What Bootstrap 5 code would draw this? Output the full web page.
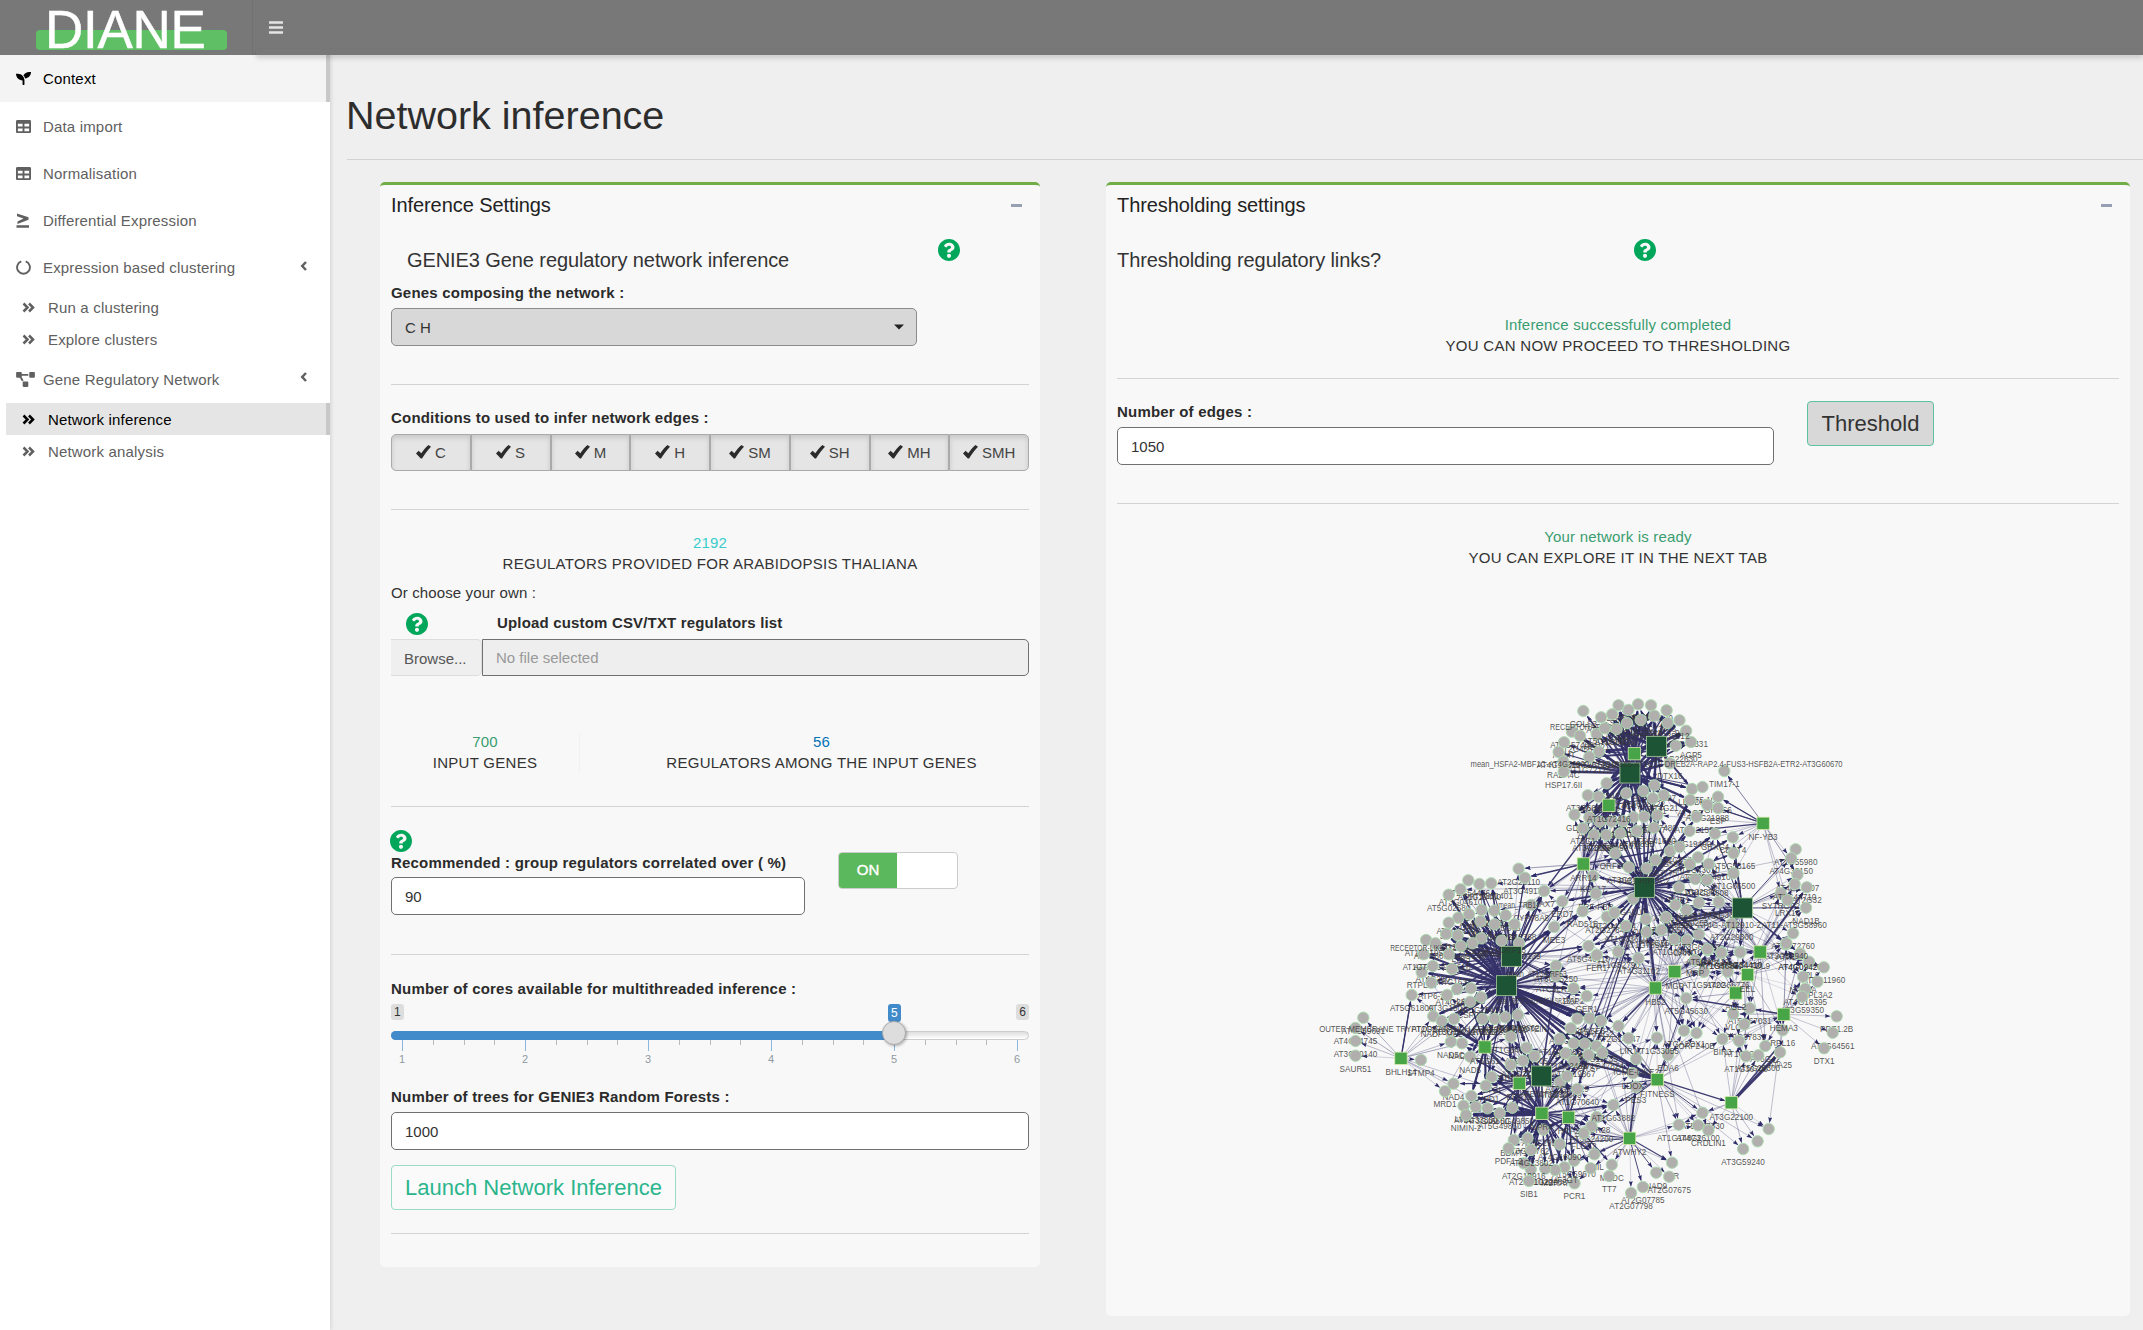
<!DOCTYPE html>
<html lang="en">
<head>
<meta charset="utf-8">
<title>DIANE</title>
<link href="https://cdn.jsdelivr.net/npm/bootstrap@5.3.0/dist/css/bootstrap.min.css" rel="stylesheet">
<style>
body{font-family:"Liberation Sans",Arial,sans-serif;font-size:15px;line-height:21px;color:#333;background:#efefef;height:1330px;overflow:hidden}
.topbar{height:55px;background:#787878;position:relative;z-index:3}
.brand{width:253px;height:55px;padding-left:36px;border-right:1px solid #717171}
.brand-plate{width:191px;height:20px;margin-top:30px;background:#5fbf64;border-radius:4px;position:relative}
.brand-name{position:absolute;left:9px;bottom:-6px;font-size:53px;line-height:53px;color:#fff;-webkit-text-stroke:.5px #fff;letter-spacing:-.3px}
.toggler{padding:21px 0 0 16px}
.top-shadow{position:absolute;left:256px;right:0;bottom:0;height:6px;box-shadow:0 3px 5px rgba(0,0,0,.16);z-index:-1}
.side{width:330px;background:#fff;box-shadow:1px 0 4px rgba(0,0,0,.12);height:1275px;flex:none}
.side a{display:flex;align-items:center;color:#606060;text-decoration:none;height:47px;padding-left:16px;border-right:4px solid transparent;letter-spacing:.17px}
.side a svg{width:15px;height:15px;margin-right:12px;fill:currentColor;flex:none}
.side a svg.wide{width:19px;margin-right:8px}
.side .now{background:#f4f4f4;color:#000;border-color:#c8c8c8}
.side .sub{height:32px;margin-left:6px;padding-left:16px}
.side .sub svg{width:13px;margin-right:13px}
.side .sub.now{background:#e5e5e5}
.side a svg.caret{width:8px;height:12px;margin:-4px 18px 0 auto}
.line-ico{fill:none!important;stroke:currentColor}
.page-h{font-size:39.5px;line-height:44px;font-weight:400;color:#2d2d2d;margin:38px 0 0 -1px}
hr{margin:0;border:0;height:1px;background:#d3d3d3;opacity:1}
.panel{background:#f8f8f8;border-top:3px solid #70ad47;border-radius:5px;padding:0 11px}
.p-left{width:660px;height:1085px;margin-left:33px}
.p-right{width:1024px;height:1134px;margin-left:66px}
.p-head{height:40px;color:#222;font-size:20px;letter-spacing:-.08px}
.p-head i{width:11px;height:3px;background:#97a0b3;margin-right:7px}
.sect{font-size:20px;line-height:22px;font-weight:400;margin:24px 0 0;color:#333;letter-spacing:-.09px}
.help{width:22px;height:22px;fill:#00a65a;display:block}
.lab{font-weight:700;letter-spacing:.2px;line-height:21px;display:block;color:#2b2b2b}
.box-in{height:38px;border:1px solid #707070;border-radius:5px;background:#fff;padding:0 13px;display:flex;align-items:center;color:#333;font-size:15px}
.conds{height:37px}
.conds .btn{flex:1 1 0;border:1px solid #aaa;border-radius:0;background:#e5e5e5;box-shadow:inset 0 3px 5px rgba(0,0,0,.125);font-size:15px;color:#444;padding:0;line-height:21px}
.conds .btn:first-child{border-radius:5px 0 0 5px}.conds .btn:last-child{border-radius:0 5px 5px 0}
.conds svg{width:15px;height:14px;fill:#2b2b2b;vertical-align:-1px;margin-right:4px}
.stat{text-align:center;line-height:20.5px;letter-spacing:.28px}
.stat b{display:block;font-weight:400;letter-spacing:.18px}
.g{color:#3a9d70}
.browse{width:91px;border:1px solid #ddd;border-left:0;background:#efefef;border-radius:0 5px 5px 0;padding:8px 0 0 13px;color:#555}
.switch{width:120px;height:37px;border:1px solid #ccc;border-radius:4px;background:#fff;overflow:hidden}
.switch span{display:block;width:58px;height:100%;background:#5cb85c;color:#fff;text-align:center;line-height:34px;-webkit-text-stroke:.4px #fff}
.slider{height:66px;position:relative;font-size:12px}
.slider .tagv{position:absolute;top:0;height:16px;line-height:16px;padding:0 3px;background:#ddd;border-radius:3px}
.slider .tagv.cur{left:497px;height:18px;line-height:18px;background:#428bca;color:#fff}
.track{position:absolute;top:27px;left:0;right:0;height:9px;border:1px solid #ccc;border-radius:5px;background:linear-gradient(#dedede,#fff)}
.fill{position:absolute;top:27px;left:0;width:503px;height:9px;border-radius:5px 0 0 5px;background:#428bca}
.knob{position:absolute;left:491px;top:17px;width:24px;height:24px;border-radius:50%;background:#ddd;border:1px solid #aaa;box-shadow:1px 1px 3px rgba(0,0,0,.3)}
.ticks{position:absolute;top:36px;left:0;width:638px;height:32px}
.btn-run{height:45px;width:285px;border:1px solid #9bdcc4;border-radius:4px;font-size:22px;color:#2bb58c;padding:0;background:#fafafa}
.btn-thr{height:45px;width:127px;margin-left:33px;border:1px solid #5cc3a0;border-radius:4px;background:#d8d8d8;font-size:22px;color:#333;padding:0}
#net text{font:8.2px "Liberation Sans",Arial,sans-serif;fill:#343434;fill-opacity:.85;text-anchor:middle}
</style>
<script src="https://cdn.jsdelivr.net/npm/bootstrap@5.3.0/dist/js/bootstrap.bundle.min.js"></script>
</head>
<body>
<svg width="0" height="0" class="d-none">
<symbol id="q" viewBox="8 8 496 496"><path d="M504 256c0 137-111 248-248 248S8 393 8 256C8 119 119 8 256 8s248 111 248 248zM262.700 90c-54.500 0-89.300 23-116.600 63.800-3.500 5.300-2.300 12.400 2.700 16.200l34.700 26.300c5.200 4 12.600 3 16.700-2.100 17.800-22.700 30.100-35.800 57.300-35.800 20.400 0 45.700 13.100 45.700 33 0 15-12.400 22.600-32.600 34C247 238.500 216 255 216 296v4c0 6.600 5.400 12 12 12h56c6.600 0 12-5.400 12-12v-1.300c0-28.500 83.200-29.700 83.200-106.700 0-58-60.200-102-116.500-102zM256 338c-25.400 0-46 20.600-46 46s20.600 46 46 46 46-20.600 46-46-20.600-46-46-46z"/></symbol>
<symbol id="tb" viewBox="0 16 512 480"><path d="M464 32H48C21.500 32 0 53.500 0 80v352c0 26.500 21.500 48 48 48h416c26.500 0 48-21.500 48-48V80c0-26.500-21.500-48-48-48zM224 416H64v-96h160v96zm0-160H64v-96h160v96zm224 160H288v-96h160v96zm0-160H288v-96h160v96z"/></symbol>
<symbol id="dbl" viewBox="0 0 13 12"><path d="M1.500 2 5.500 6 1.500 10M7 2 11 6 7 10" fill="none" stroke="currentColor" stroke-width="2.500"/></symbol>
<symbol id="lt" viewBox="0 0 8 12"><path d="M6 2 2.200 6 6 10" fill="none" stroke="currentColor" stroke-width="2.500"/></symbol>
<symbol id="ck" viewBox="0 0 15 14"><path d="M0 8.500 2.600 5.800 5.300 8.300C7.500 5 9.800 2.200 12.500 0L15 1.800C11.500 5.300 9 9 6 13.600H4.800Z"/></symbol>
</svg>
<header class="topbar d-flex">
  <div class="brand"><div class="brand-plate"><span class="brand-name">DIANE</span></div></div>
  <div class="toggler"><svg width="14" height="13" class="d-block"><path d="M0 1.500h14M0 6.500h14M0 11.500h14" stroke="#e4e4e4" stroke-width="2.400"/></svg></div>
  <div class="top-shadow"></div>
</header>
<div class="d-flex">
<nav class="side">
  <a href="#" class="now"><svg viewBox="0 0 512 512"><path d="M64 96H0c0 123.700 100.300 224 224 224v144c0 8.800 7.200 16 16 16h32c8.800 0 16-7.200 16-16V320C288 196.300 187.700 96 64 96zm384-64c-84.200 0-157.400 46.500-195.700 115.200 27.700 30.200 48.200 66.900 59 107.600C424.300 243.100 512 147.900 512 32h-64z"/></svg>Context</a>
  <a href="#" style="margin-top:1px"><svg><use href="#tb"/></svg>Data import</a>
  <a href="#"><svg><use href="#tb"/></svg>Normalisation</a>
  <a href="#"><svg viewBox="0 0 15 15"><path d="M1 .5 12.500 4.300v2.400L1.500 11V8.400L7.500 5.600 1 3.200zM.5 12.300h12.500v2.500H.5z"/></svg>Differential Expression</a>
  <a href="#"><svg viewBox="0 0 15 15" class="line-ico"><path d="M5.300 1.300a6.400 6.400 0 1 0 4.400 0" stroke-width="1.900"/></svg>Expression based clustering<svg class="caret"><use href="#lt"/></svg></a>
  <a href="#" class="sub"><svg><use href="#dbl"/></svg>Run a clustering</a>
  <a href="#" class="sub"><svg><use href="#dbl"/></svg>Explore clusters</a>
  <a href="#" style="height:48px"><svg class="wide" viewBox="0 0 640 512"><path d="M384 320H256c-17.700 0-32 14.300-32 32v128c0 17.700 14.300 32 32 32h128c17.700 0 32-14.300 32-32V352c0-17.700-14.300-32-32-32zM192 32c0-17.700-14.300-32-32-32H32C14.300 0 0 14.300 0 32v128c0 17.700 14.300 32 32 32h95.700L201 320c11-19 31.400-32 55-32h.3L192 175.500V128h224V64H192V32zM608 0H480c-17.700 0-32 14.300-32 32v128c0 17.700 14.300 32 32 32h128c17.700 0 32-14.300 32-32V32c0-17.700-14.300-32-32-32z"/></svg>Gene Regulatory Network<svg class="caret"><use href="#lt"/></svg></a>
  <a href="#" class="sub now"><svg><use href="#dbl"/></svg>Network inference</a>
  <a href="#" class="sub"><svg><use href="#dbl"/></svg>Network analysis</a>
</nav>
<main style="padding-left:17px" class="flex-grow-1">
  <h1 class="page-h">Network inference</h1>
  <hr style="margin:22px 0">
  <div class="d-flex align-items-start">
  <section class="panel p-left">
    <div class="p-head d-flex align-items-center justify-content-between">Inference Settings<i></i></div>
    <div class="d-flex justify-content-between" style="height:57px">
      <h4 class="sect" style="padding-left:16px">GENIE3 Gene regulatory network inference</h4>
      <svg class="help" style="margin:14px 69px 0 0"><use href="#q"/></svg>
    </div>
    <label class="lab">Genes composing the network :</label>
    <div class="box-in justify-content-between" style="width:526px;margin-top:5px;background:#d8d8d8;border-color:#8c8c8c">C H<svg width="10" height="6" style="margin-right:-1px"><path d="M0 .5h10L5 5.500z" fill="#222"/></svg></div>
    <hr style="margin:38px 0 22px">
    <label class="lab">Conditions to used to infer network edges :</label>
    <div class="conds d-flex" style="margin-top:6px" id="conds"></div>
    <hr style="margin:38px 0 23px">
    <div class="stat"><b style="color:#39cccc">2192</b>REGULATORS PROVIDED FOR ARABIDOPSIS THALIANA</div>
    <div style="margin-top:8px;letter-spacing:.12px">Or choose your own :</div>
    <div class="d-flex align-items-center" style="height:24px;margin-top:9px;padding-left:15px"><svg class="help"><use href="#q"/></svg><label class="lab" style="margin:-3px 0 0 69px;letter-spacing:.17px">Upload custom CSV/TXT regulators list</label></div>
    <div class="d-flex" style="margin-top:3px"><div class="browse">Browse...</div><div class="box-in flex-grow-1" style="height:37px;border-radius:0 5px 5px 0;background:#eee;color:#999">No file selected</div></div>
    <div class="d-flex" style="margin-top:56px"><div class="stat" style="width:189px;border-right:1px solid #f2f2f2"><b class="g">700</b>INPUT GENES</div><div class="stat" style="width:483px;margin-right:-34px"><b style="color:#0073b7">56</b>REGULATORS AMONG THE INPUT GENES</div></div>
    <hr style="margin:33px 0 23px">
    <div class="d-flex align-items-start">
      <div style="width:414px"><svg class="help" style="margin-left:-1px"><use href="#q"/></svg><label class="lab">Recommended : group regulators correlated over ( %)</label><div class="box-in" style="margin-top:4px">90</div></div>
      <div class="switch" style="margin:22px 0 0 33px"><span>ON</span></div>
    </div>
    <hr style="margin:39px 0 23px">
    <label class="lab">Number of cores available for multithreaded inference :</label>
    <div class="slider" style="margin-top:5px">
      <span class="tagv" style="left:0">1</span><span class="tagv" style="right:0">6</span><span class="tagv cur">5</span>
      <div class="track"></div><div class="fill"></div><svg class="ticks" id="ticks"></svg><div class="knob"></div>
    </div>
    <label class="lab" style="margin-top:16px">Number of trees for GENIE3 Random Forests :</label>
    <div class="box-in" style="margin-top:5px">1000</div>
    <button class="btn btn-run" style="margin-top:15px">Launch Network Inference</button>
    <hr style="margin-top:23px">
  </section>
  <section class="panel p-right">
    <div class="p-head d-flex align-items-center justify-content-between">Thresholding settings<i></i></div>
    <div class="d-flex justify-content-between" style="height:90px">
      <h4 class="sect">Thresholding regulatory links?</h4>
      <svg class="help" style="margin:14px 463px 0 0"><use href="#q"/></svg>
    </div>
    <div class="stat"><b class="g">Inference successfully completed</b>YOU CAN NOW PROCEED TO THRESHOLDING</div>
    <hr style="margin:22px 0">
    <div class="d-flex align-items-start">
      <div style="width:657px"><label class="lab">Number of edges :</label><div class="box-in" style="margin-top:5px">1050</div></div>
      <button class="btn btn-thr">Threshold</button>
    </div>
    <hr style="margin:38px 0 23px">
    <div class="stat"><b class="g">Your network is ready</b>YOU CAN EXPLORE IT IN THE NEXT TAB</div>
    <svg id="net" class="d-block" width="1002" height="700" viewBox="1117 600 1002 700" style="margin-top:32px"></svg>
  </section>
  </div>
</main>
</div>
<script>
document.getElementById('conds').innerHTML=['C','S','M','H','SM','SH','MH','SMH'].map(c=>`<button class="btn"><svg><use href="#ck"/></svg>${c}</button>`).join('');
let t='';
for(let i=0;i<=20;i++){const x=11+i*30.75,big=i%4===0;
 t+=`<rect x="${Math.round(x)}" y="0" width="1" height="${big?11:5}" fill="${big?'#8ab7dd':'#bbb'}"/>`;
 if(big)t+=`<text x="${x}" y="23" font-size="11" fill="#8f9aa3" text-anchor="middle">${i/4+1}</text>`}
document.getElementById('ticks').innerHTML=t;

// Network layout: upper and lower halves are stored on their own grid
const U=[0,680],L=[0,940];
const at=(o,x,y)=>[1300+x*.36990,o[1]+y/3];
// hubs: half, x, y, big, reach, edge width, label
const hubs=[[U,964,199,1,60,2.600,''],[U,892,279,1,88,2.100,''],[U,931,622,1,105,1.700,'PIB1-HIPOC2'],[U,1196,684,1,85,.9,''],[L,572,49,1,85,1.700,'-ORF13'],[L,558,137,1,108,2.300,''],[L,653,408,1,68,1.700,''],
[U,904,221,0,62,1.900,''],[U,835,376,0,46,1.400,'AT1G72416'],[U,1252,430,0,66,.8,'NF-YB3'],[U,766,552,0,75,.9,'ARR14'],[U,1244,816,0,95,.7,'TDL9'],
[L,500,321,0,58,1.300,'AT5G61'],[L,273,355,0,68,.8,'BHLH14'],[L,593,430,0,66,1.400,'ERF12'],[L,654,520,0,76,1.900,'NPR4'],[L,726,532,0,70,1.200,'HRF2'],[L,891,595,0,78,.9,'ATWHY2'],[L,966,419,0,88,.9,'FITNESS'],[L,1166,488,0,60,.8,'AT3G22100'],[L,1178,159,0,60,.7,'AGL2'],[L,961,144,0,88,.8,'HB52'],[L,1013,95,0,85,.7,'MGP'],[L,1210,104,0,62,.7,'EEL'],[L,1308,223,0,66,.7,'HEMA3']];
const up=`766,93,GOLS3;861,76;914,73,1G09450;949,76,AT5G25170;991,91,250;844,103;888,90,SYTRAP2;814,112,AT2G52;958,107;1026,121,90;1044,152;1057,186,AGP5;1016,197,AT5G22630;994,129;884,129;921,120;735,155,AT5G57460;757,167,AT2G45570;802,162,HSP21;824,145;856,147;714,187,ASMT;699,216;808,215,AT2G58995;782,231,AT1G72125;712,245,RABA4C;713,275,HSP17.6II;1000,250,DTX16;1147,273,TIM17-1;829,310,AT5G54120;958,316;928,333;882,340,AT4G47;983,346,AT4G21;954,355,GASA1;778,346,AT3G60780;807,350;1060,327,LECDH;1088,321,AT5.10;1130,350,GRXS6;1055,360,AT1G7;1101,375,AT3G21988;1130,384,ESP;742,404,GDL;782,412,EXPA7;810,425;842,425;873,424;902,412;930,410;966,406,AT3G7480;1072,410,AT1G21550;1053,453,AT5G19400;1122,461,GRXC4;1170,472,CDST4;957,443,AT5G41690;911,453,AT4G89B;866,460;828,465,AT3G36650;795,465,AT3G18680;765,445,AT5G1;1000,513;1026,501;1172,520,AT5G53165;852,520,ORF107;961,540;889,562;937,565,PIB1;1076,532,AT5G43010;1105,552;1054,552,AT2G;1172,580,AT1G66500;1069,597,AT1G02570;1100,600;792,588,KCS17;591,566,AT2G23110;608,593,AT3G49130;800,641,ERF-FBR;660,633,CAX7;709,664,ERD7;625,675,CYP78A8;764,694,RAD51B;830,710,AT2G27840;850,698;687,741,MEE3;901,656,GALU1;1025,622,EHB1;1078,668,AT3G12730;1132,665,AT1G33;1045,690;1015,675;935,718,OHP55;990,712,AT1G5650;881,738;937,756,AT1G78541;977,750;1167,731,AT2G29300;1012,777,AT1G09600;1046,780,CAND1;1078,763;780,798,AT5G40110;802,825,FER1;860,815,AT1G52790;915,835;1102,810,MPK3;1139,818;1190,817,AT5G34410;1340,508,AT1G55980;1328,535,AT4G33150;1345,584,AT4G16807;1370,622,AT2G32;1300,640,SYTROP2;1337,612,AT3G44710;1368,683,NAD1B;1333,760,AT5G72760;1314,793,ATP1;1352,821,AT4G09420;1318,660,LRX10;455,601;485,612,AT5G19400;517,610,AT1G51401;434,628,AT3G04610;402,644,AT5G02580;491,690;525,692;457,703,ORF;428,713;402,728,SIP4;556,706,AT5G63;580,733;526,733;488,724,GH3.3;395,762,AT1G22;426,766,AT1G86;341,780;366,790;490,775;545,782;592,790;466,790,CGC48;435,798,LTP3;334,823,ATP2;402,823`;
const low=`359,78,AT4G210;329,97,RTPL24;411,87,AT4G1632;692,77,AT3G05250;692,107,ATC3LR15;355,128,ATP6-2;302,165,AT5G61800;425,147;462,145,LAF408;398,165,AT3G1501;490,172;460,185,CSP01;360,229;383,243,NADP-ME2;416,237;494,237,AT1G5;526,237;555,232,AT3G47550;589,225;740,145,DAP2;775,168,GER1;750,236,LOG5;783,235,CPA5E8;814,243,AT4G2;732,265;861,258,AT2G14247;888,295,LIR1;702,296,AT1G68050;740,310,AT5G12500;770,311;801,318;817,338;780,345,GYS7;570,290;612,323;634,348,12100;603,362,AT2G21905;570,375,ATERDPET;740,362;718,340;171,233;150,264,AT4G04745;150,303,AT3G50140;150,347,SAUR51;327,360,STMP4;408,305,NAD5C;438,310,NAD2A;460,350,NAD5;518,411,ATGI;502,437,CYPD1;415,431,NAD4;392,454,MRD1;463,468,AT1G;475,500,AT2G33830;507,505,AT3G46600;442,497,LIM1;574,503,AT5G49850;449,525,NIMIN-2;540,520,AT5G49860;703,427;722,409;750,447,AT1G70640;802,531,COR28;788,559,AT3G24200;767,580,FLOT2;847,495,;908,440,PES3;900,400,LDOX;909,357,ICME-LIKE2;995,345,EDA6;965,293,AT1G33055;1038,272,ATGA2OX1;1072,279,ORF240B;1044,175,AT5G45630;1092,95,AT1G51402;1156,95;1068,60,MRP;1102,28;1139,38,AT1G36860;1190,37,AT5G34410;1216,205;1171,222,VLC;1201,253,AT2G37835;1187,303,AT1G19;1142,297,BIR3;1258,318,AT5G42;1298,337,ATA25;1206,349,AT1G30700;1239,346,AT5G26300;1305,271,RPL16;1451,229,PDF1.2B;1440,278,AT1G64561;1417,325,DTX1;1376,65,RPL2;1352,41,AT4G09420;1416,82,AT5G11960;1399,125,SPL3A2;1360,110,NAD4A;1366,146,AT4G18395;1315,10;1358,170,AT3G59350;1088,518,AT5G27330;1024,554,AT1G14873;1076,556,AT4G26100;1104,571,CRDLIN1;1198,627,AT3G59240;1237,604,-;1267,567,-;1006,668,CIR;963,698,NAD9;998,710,AT2G07675;927,741,AT2G07785;895,759,AT2G07798;843,674,MADC;836,708,TT7;796,643,CHIL;741,662,AT5G59670;742,730,PCR1;715,682,UF3GT;690,690,MSRA7;663,686,AT1G22985;624,688,AT2G21020;605,670;619,723,SIB1;658,569,AT3G29510;615,595,AT3G41762;578,600,BBMT1;564,625,PDF1.2;702,613,AT4G18090;625,630;786,685,-`;
const nodes=[];
[[U,up],[L,low]].forEach(([o,s])=>s.split(';').forEach(r=>{const[x,y,l]=r.split(',');nodes.push([...at(o,+x,+y),l||''])}));
let seed=7;const rnd=()=>(seed=(seed*16807)%2147483647)/2147483647;
let s='<defs><marker id="ar" markerUnits="userSpaceOnUse" markerWidth="6" markerHeight="4" refX="5" refY="2" orient="auto"><path d="M0 0 6 2 0 4 1 2z" fill="#2b2a66"/></marker></defs>';
const edge=(a,b,w,o)=>{const dx=b[0]-a[0],dy=b[1]-a[1],d=Math.hypot(dx,dy)||1,k=(d-7)/d;if(d<14)return;
 s+=`<path d="M${a[0].toFixed(1)} ${a[1].toFixed(1)}L${(a[0]+dx*k).toFixed(1)} ${(a[1]+dy*k).toFixed(1)}" stroke="#343268" stroke-width="${w.toFixed(2)}" stroke-opacity="${o}" marker-end="url(#ar)"/>`};
hubs.forEach((h,i)=>{const c=at(h[0],h[1],h[2]);nodes.forEach(n=>{const d=Math.hypot(n[0]-c[0],n[1]-c[1]);
 if(d<h[4]&&rnd()<(h[5]>.75?.92:.68)){const w=h[5]*(.4+rnd()*.8);edge(c,n,w,w>.9?.95:.5)}
 else if(d<h[4]*1.9&&n[1]>800&&rnd()<(h[3]?.16:.13))edge(c,n,.6,.5)})});
// long links between modules
const P=(o,x,y)=>at(o,x,y);
[[U,1252,430,U,1147,273,.7],[U,1252,430,U,1130,350,1.200],[U,1252,430,U,1101,375,1.200],[U,1252,430,U,1053,453,1.300],[U,1252,430,U,1345,584,.6],[U,1252,430,U,1300,640,.6],[U,766,552,U,591,566,.6],[U,766,552,U,608,593,1.500],[U,766,552,U,660,633,1.500],[U,766,552,U,1026,501,1.600],[U,835,376,U,660,633,1.500],[U,892,279,U,766,552,1.600],[U,892,279,U,1060,327,1.500],
[U,931,622,U,1055,360,2],[U,931,622,U,1072,410,2],[U,931,622,U,1122,461,1.800],[U,931,622,U,709,664,1.500],[U,931,622,L,780,18,1.700],[U,931,622,L,961,144,2.400],[U,1196,684,U,1015,720,2.600],[U,1196,684,U,780,798,1.600],[U,1196,684,U,1172,480,1.200],[U,1244,816,U,1370,622,2],[L,1166,488,L,1298,337,3],[L,273,355,L,302,165,1.400],[U,1060,340,U,931,622,1.600],[U,835,376,U,764,694,1.500],[L,572,49,U,580,733,1.500],[L,572,49,U,660,633,1.600],[L,572,49,U,687,741,1.900],[L,572,49,U,608,593,1.200],[L,572,49,U,591,566,.5],
[L,558,137,L,750,236,3.600],[L,558,137,L,783,235,3.200],[L,558,137,L,814,243,3],[L,558,137,L,732,265,3],[L,558,137,L,740,145,2],[L,558,137,L,500,321,1.800],[L,653,408,L,692,107,1.500],[L,383,243,L,500,321,3],[L,500,321,L,593,430,2.600],[L,593,430,L,654,520,3],[L,654,520,L,475,525,5],[L,654,520,L,449,525,4],[L,966,419,L,740,362,2],[L,966,419,L,780,345,2],[L,966,419,L,732,265,2],[L,966,419,L,801,318,2],[L,966,419,L,1166,488,1.400],[L,891,595,L,908,440,1.700],[L,961,144,L,861,258,1.300],[L,961,144,L,1038,272,1.300],[L,1308,223,L,1044,175,1.500],[L,961,144,L,692,107,.6],[L,1244,36,L,558,137,.5],[L,1013,95,L,572,49,.5],[L,961,144,L,740,450,.6],[U,931,622,L,732,340,.9],[U,931,622,L,750,440,.9],[U,964,622,L,740,362,.7],[L,1013,95,L,740,362,.7],[U,931,622,L,770,311,1.300],[U,931,622,L,801,318,1.200],[U,915,835,L,780,345,1.100],[L,966,419,L,1239,30,.5],[L,966,419,L,1308,223,.5],[L,891,595,L,980,144,.5],[L,1166,488,L,1308,300,1.600],[L,500,321,L,463,468,2.200],[L,500,321,L,502,437,2],[L,654,520,L,624,688,1.800],[L,726,532,L,690,690,1.600],[L,726,532,L,615,595,2]
].forEach(e=>edge(P(e[0],e[1],e[2]),P(e[3],e[4],e[5]),e[6],e[6]>1?.95:.5));
nodes.forEach(n=>{s+=`<circle cx="${n[0].toFixed(1)}" cy="${n[1].toFixed(1)}" r="5.700" fill="#b1afae" stroke="#a9dcae" stroke-width=".9"/>`;
 const l=n[2]==='-'?'':n[2]||(n[0]<1800?'AT'+(1+Math.floor(rnd()*5))+'G'+(10000+Math.floor(rnd()*60000)):'');
 if(l)s+=`<text x="${n[0].toFixed(1)}" y="${(n[1]+16).toFixed(1)}">${l}</text>`});
hubs.forEach(h=>{const c=at(h[0],h[1],h[2]),r=h[3]?10:6.200;
 s+=`<rect x="${c[0]-r}" y="${c[1]-r}" width="${2*r}" height="${2*r}" fill="${h[3]?'#1d5436':'#47a447'}" stroke="${h[3]?'#a8cf9a':'#d9ecb0'}" stroke-width=".8"/>`;
 if(h[6])s+=`<text x="${c[0]}" y="${c[1]+(h[3]?-3:17)}">${h[6]}</text>`});
[[U,964,260,'mean_HSFA2-MBF1C-AT4G36990-AT3G10585-AT1G32-DREB2A-RAP2.4-FUS3-HSFB2A-ETR2-AT3G60670',372],[L,360,275,'OUTER MEMBRANE TRYPTOPHAN-RICH SENSORY PROTEIN',228],[U,1215,743,'mean_AT4G-AT12910-ZAT11-AT5G58960',155],[L,640,110,'mean_AT13-ERF53',60],[L,640,192,'mean_RRTF1-BLHB(G)ASR3-BOA',82],[U,590,684,'mean_TRB1-',40],[L,660,470,'ATERDREB13',46],[U,317,812,'RECEPTOR-LIKE',54],[U,730,151,'RECEPTOR',40],[L,310,90,'AT1G7',24]].forEach(([o,x,y,l,w])=>{const p=at(o,x,y);s+=`<text x="${p[0]}" y="${p[1]}" textLength="${w}" lengthAdjust="spacingAndGlyphs">${l}</text>`});
document.getElementById('net').innerHTML=s;
</script>
</body>
</html>
